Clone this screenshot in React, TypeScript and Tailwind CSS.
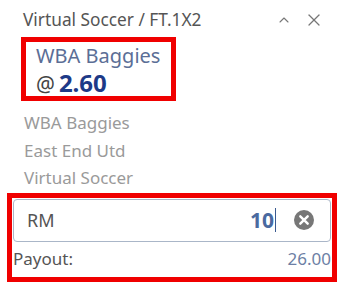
import { ChevronUp, X } from 'lucide-react';

const FONT = "font-['Noto_Sans','Open_Sans',sans-serif]";

export default function App() {
  return (
    <div className={`w-[348px] h-[291px] bg-white overflow-hidden ${FONT}`}>
      {/* Header */}
      <div className="flex items-center h-[37px] pl-[23px] pr-[24px] pt-[3px]">
        <span className="text-[17.3px] text-[#555] leading-none">Virtual Soccer / FT.1X2</span>
        <div className="ml-auto flex items-center gap-[12px] text-[#777]">
          <ChevronUp size={16} strokeWidth={1.6} />
          <X size={20} strokeWidth={1.5} />
        </div>
      </div>

      {/* Selection */}
      <div className="ml-[21px] w-[155px] h-[64px] border-[5px] border-[#f00000] pl-[10px] pt-[1px] flex flex-col">
        <div className="text-[20px] leading-[26px] text-[#5b6e96]">WBA Baggies</div>
        <div className="flex items-baseline leading-[27px]">
          <span className="text-[21px] text-[#444] mr-[4px]">@</span>
          <span className="text-[24px] font-bold text-[#1d3a87]">2.60</span>
        </div>
      </div>

      {/* Event details */}
      <div className="pl-[24px] pt-[8px] flex flex-col text-[17px] leading-[27.5px] text-[#9a9a9a]">
        <span>WBA Baggies</span>
        <span>East End Utd</span>
        <span>Virtual Soccer</span>
      </div>

      {/* Stake */}
      <div className="mt-[1px] ml-[7px] w-[330px] h-[89px] border-[5px] border-[#f00000] pt-[1px] px-[1px] flex flex-col">
        <div className="h-[43px] border border-[#aab6c8] rounded-[4px] flex items-center pl-[13px] pr-[16px]">
          <span className="text-[18px] text-[#555]">RM</span>
          <span className="ml-auto text-[21px] font-bold text-[#4a6aa0] leading-none">10</span>
          <span className="w-px h-[24px] bg-[#3a5a90] ml-[1px]" />
          <svg className="ml-[18px]" width="20" height="20" viewBox="0 0 20 20">
            <circle cx="10" cy="10" r="10" fill="#777" />
            <path d="M6.3 6.3 L13.7 13.7 M13.7 6.3 L6.3 13.7" stroke="#fff" strokeWidth="2.4" strokeLinecap="round" />
          </svg>
        </div>
        <div className="flex items-center justify-between h-[34px] text-[17px]">
          <span className="text-[#555]">Payout:</span>
          <span className="text-[#6d7fa5]">26.00</span>
        </div>
      </div>
    </div>
  );
}
